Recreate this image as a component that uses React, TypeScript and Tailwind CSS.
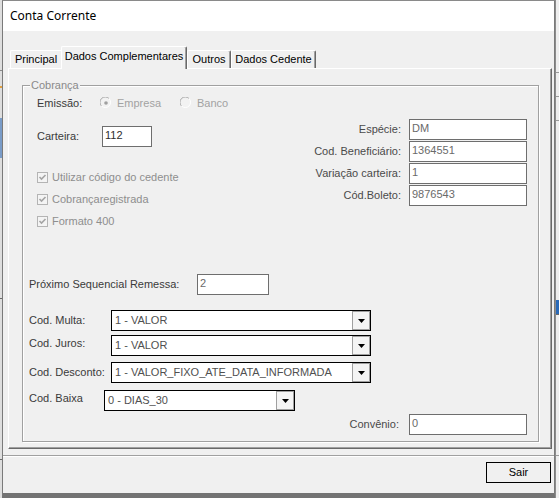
import React from "react";

const font = "font-['Liberation_Sans',Arial,sans-serif]";

function TextBox({ value, className, dark }: { value: string; className: string; dark?: boolean }) {
  return (
    <div
      className={`h-[21px] shrink-0 border border-[#6e6e6e] bg-white pl-[2px] text-[11px] leading-[17px] ${
        dark ? "text-[#2e2e2e]" : "text-[#6a6a6a]"
      } ${className}`}
    >
      {value}
    </div>
  );
}

function Arrow() {
  return (
    <svg width="7" height="4" viewBox="0 0 7 4">
      <polygon points="0,0 7,0 3.5,4" fill="#000" />
    </svg>
  );
}

function Combo({ value, className }: { value: string; className: string }) {
  return (
    <div className={`flex h-[21px] shrink-0 border border-black bg-white ${className}`}>
      <div className="flex-1 pl-[3px] text-[11px] leading-[19px] text-[#505050]">{value}</div>
      <div className="flex w-[18px] items-center justify-center border border-[#a0a0a0] bg-[#f4f4f4]">
        <Arrow />
      </div>
    </div>
  );
}

function Radio({ checked }: { checked?: boolean }) {
  return (
    <svg width="12" height="12" viewBox="0 0 12 12" className="shrink-0">
      <circle cx="6" cy="6" r="5" fill="#f2f2f2" />
      <path d="M1.5 9 A5 5 0 0 1 9 1.5" stroke="#a8a8a8" strokeWidth="1" fill="none" />
      <path d="M2.5 9.9 A5 5 0 0 1 2.1 2.5" stroke="#c8c8c8" strokeWidth="0" fill="none" />
      <path d="M9 1.5 A5 5 0 0 1 1.5 9" stroke="#ffffff" strokeWidth="1" fill="none" />
      {checked && <circle cx="6" cy="6" r="1.8" fill="#a0a0a0" />}
    </svg>
  );
}

function Check({ label }: { label: string }) {
  return (
    <div className="flex h-[13px] items-center">
      <svg width="11" height="11" viewBox="0 0 11 11" className="shrink-0">
        <rect x="0.5" y="0.5" width="10" height="10" fill="#f4f4f4" stroke="#b4b4b4" />
        <path d="M2.5 5 L4.5 7 L8.5 3" stroke="#a4a4a4" strokeWidth="1.6" fill="none" />
      </svg>
      <span className="ml-[4px] text-[11px] leading-[13px] text-[#8e8e8e]">{label}</span>
    </div>
  );
}

function RightRow({ label, value }: { label: string; value: string }) {
  return (
    <div className="flex items-center justify-end">
      <span className="text-[11px] text-[#4a4a4a]">{label}</span>
      <TextBox value={value} className="ml-[8px] w-[118px]" />
    </div>
  );
}

export default function App() {
  return (
    <div className={`flex h-[498px] w-[559px] overflow-hidden bg-[#e4e4e4] ${font}`}>
      {/* left background strip */}
      <div className="flex w-[2px] shrink-0 flex-col bg-[#dedede]">
        <div className="mt-[70px] h-[1px] bg-[#8a8a8a]" />
        <div className="mt-[15px] h-[2px] bg-[#e0a040]" />
        <div className="mt-[30px] h-[40px] bg-[#7a9cc8]" />
        <div className="mt-[140px] h-[1px] bg-[#6a6a6a]" />
        <div className="mt-[160px] h-[1px] bg-[#6a6a6a]" />
      </div>

      {/* window */}
      <div className="flex w-[553px] shrink-0 flex-col border-x border-t border-b-[5px] border-x-[#7a7a7a] border-t-[#8a8a8a] border-b-[#737373] bg-[#f0f0f0]">
        {/* title bar */}
        <div className="flex h-[30px] shrink-0 items-center bg-white pl-[7px] font-['Noto_Sans',sans-serif] text-[12px] text-black">
          Conta Corrente
        </div>

        {/* body */}
        <div className="flex flex-1 flex-col pt-[15px]">
          {/* tabs */}
          <div className="relative z-10 -mb-[1px] ml-[7px] flex h-[23px] items-end text-[11px] text-black">
            <div className="mb-[1px] flex h-[18px] w-[51px] items-center justify-center rounded-tl-[2px] border-l border-t border-white pb-[1px]">
              Principal
            </div>
            <div className="flex h-[23px] w-[126px] items-center justify-center rounded-t-[2px] border-l border-r border-t border-l-white border-r-[#696969] border-t-white bg-[#f0f0f0] pb-[4px] shadow-[inset_-1px_0_0_#a0a0a0]">
              Dados Complementares
            </div>
            <div className="mb-[1px] flex h-[18px] w-[44px] items-center justify-center rounded-t-[2px] border-l border-r border-t border-l-white border-r-[#696969] border-t-white pb-[1px] shadow-[inset_-1px_0_0_#a0a0a0]">
              Outros
            </div>
            <div className="mb-[1px] flex h-[18px] w-[85px] items-center justify-center rounded-t-[2px] border-l border-r border-t border-l-white border-r-[#696969] border-t-white pb-[1px] shadow-[inset_-1px_0_0_#a0a0a0]">
              Dados Cedente
            </div>
          </div>

          {/* tab panel */}
          <div className="ml-[5px] w-[544px] border-b border-l border-r border-t border-b-[#696969] border-l-white border-r-[#696969] border-t-white px-[12px] pb-[6px] pl-[13px] pt-[16px] shadow-[inset_-1px_-1px_0_#a0a0a0]">
            {/* group box */}
            <div className="relative w-[517px] border border-[#a0a0a0] shadow-[1px_1px_0_#ffffff,inset_1px_1px_0_#ffffff] pb-[6px] pt-[9px]">
              <span className="absolute -top-[7px] left-[7px] bg-[#f0f0f0] px-[1px] text-[11px] leading-[13px] text-[#8a8a8a]">
                Cobrança
              </span>

              {/* top section */}
              <div className="flex justify-between">
                <div className="ml-[14px] flex flex-col">
                  <div className="flex h-[16px] items-center text-[11px]">
                    <span className="w-[63px] text-[#3a3a3a]">Emissão:</span>
                    <div className="flex w-[80px] items-center">
                      <Radio checked />
                      <span className="ml-[5px] text-[#a2a2a2]">Empresa</span>
                    </div>
                    <div className="flex items-center">
                      <Radio />
                      <span className="ml-[5px] text-[#a2a2a2]">Banco</span>
                    </div>
                  </div>
                  <div className="mt-[15px] flex items-center text-[11px]">
                    <span className="w-[65px] text-[#3a3a3a]">Carteira:</span>
                    <TextBox value="112" className="w-[50px]" dark />
                  </div>
                  <div className="mt-[24px] flex flex-col gap-[9px]">
                    <Check label="Utilizar código do cedente" />
                    <Check label="Cobrançaregistrada" />
                    <Check label="Formato 400" />
                  </div>
                </div>
                <div className="mr-[11px] flex flex-col gap-[1px] pt-[24px]">
                  <RightRow label="Espécie:" value="DM" />
                  <RightRow label="Cod. Beneficiário:" value="1364551" />
                  <RightRow label="Variação carteira:" value="1" />
                  <RightRow label="Cód.Boleto:" value="9876543" />
                </div>
              </div>

              {/* Próximo Sequencial */}
              <div className="ml-[6px] mt-[46px] flex items-center text-[11px]">
                <span className="w-[168px] text-[#3a3a3a]">Próximo Sequencial Remessa:</span>
                <TextBox value="2" className="w-[72px]" />
              </div>

              {/* combos */}
              <div className="ml-[6px] mt-[15px] flex items-center text-[11px]">
                <span className="w-[82px] text-[#3a3a3a]">Cod. Multa:</span>
                <Combo value="1 - VALOR" className="w-[260px]" />
              </div>
              <div className="ml-[6px] mt-[4px] flex items-center text-[11px]">
                <span className="w-[82px] pb-[4px] text-[#3a3a3a]">Cod. Juros:</span>
                <Combo value="1 - VALOR" className="w-[260px]" />
              </div>
              <div className="ml-[6px] mt-[6px] flex items-center text-[11px]">
                <span className="w-[82px] text-[#3a3a3a]">Cod. Desconto:</span>
                <Combo value="1 - VALOR_FIXO_ATE_DATA_INFORMADA" className="w-[260px]" />
              </div>
              <div className="ml-[6px] mt-[7px] flex items-center text-[11px]">
                <span className="w-[75px] pb-[5px] text-[#3a3a3a]">Cod. Baixa</span>
                <Combo value="0 - DIAS_30" className="w-[191px]" />
              </div>

              {/* Convênio */}
              <div className="mr-[11px] mt-[2px] flex items-center justify-end text-[11px]">
                <span className="text-[#4a4a4a]">Convênio:</span>
                <TextBox value="0" className="ml-[10px] w-[118px]" />
              </div>
            </div>
          </div>

          {/* separator */}
          <div className="mt-[6px] h-[1px] bg-[#a0a0a0]" />
          <div className="h-[1px] bg-white" />

          {/* footer */}
          <div className="flex justify-end pr-[3px] pt-[5px]">
            <div className="flex h-[21px] w-[65px] items-center justify-center border border-black bg-[#f0f0f0] text-[11px] text-black">
              Sair
            </div>
          </div>
        </div>
      </div>

      {/* right background strip */}
      <div className="flex flex-1 flex-col border-l border-[#8c8c8c] bg-[#eeeeee]">
        <div className="mt-[72px] h-[1px] bg-[#9a9a9a]" />
        <div className="mt-[23px] h-[1px] bg-[#9a9a9a]" />
        <div className="mt-[23px] h-[1px] bg-[#9a9a9a]" />
        <div className="mt-[179px] h-[14px] bg-[#2a6ab8]" />
        <div className="h-[1px] bg-[#6a6a6a]" />
        <div className="mt-[140px] h-[1px] bg-[#9a9a9a]" />
      </div>
    </div>
  );
}
